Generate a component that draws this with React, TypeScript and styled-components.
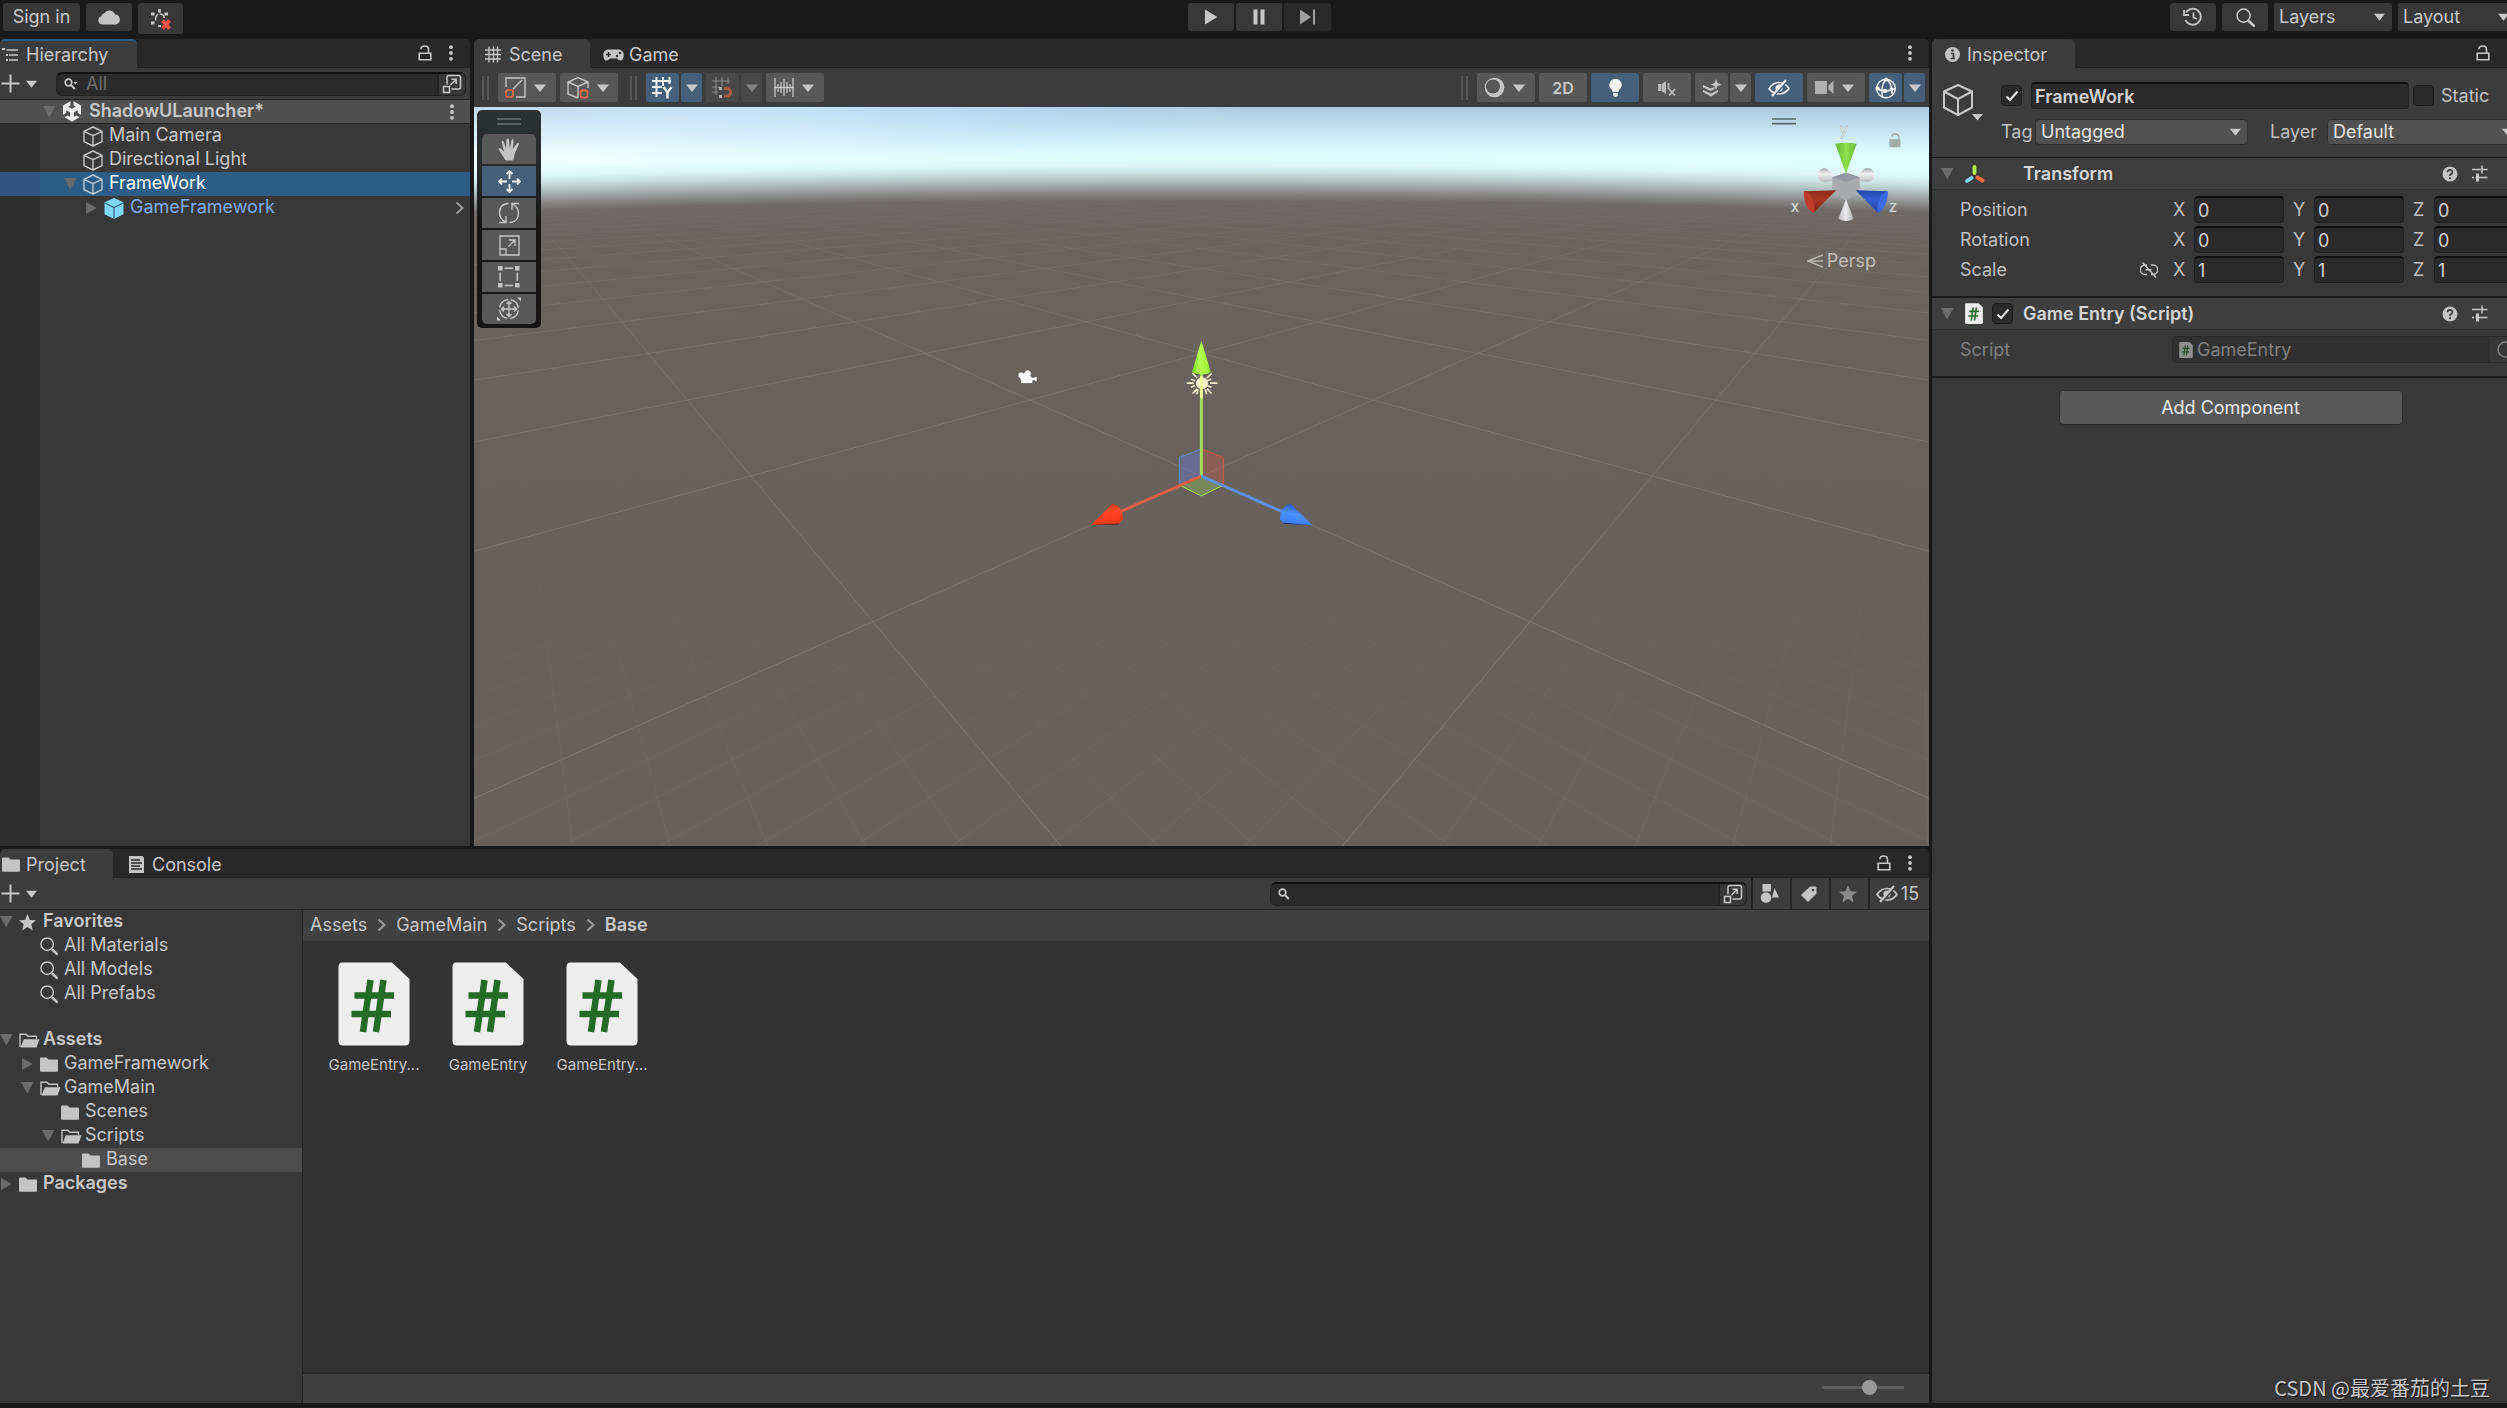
import React from 'react';
import styled, { createGlobalStyle } from 'styled-components';

const c = {
  frame: '#191919',
  tabs: '#282828',
  bar: '#3c3c3c',
  panel: '#383838',
  field: '#2a2a2a',
  line: '#232323',
  text: '#c8c8c8',
  dim: '#808080',
  button: '#585858',
  on: '#46607c',
  select: '#2c5d87',
};

const Global = createGlobalStyle`
  *, *::before, *::after { box-sizing: border-box; }
  html, body { margin: 0; background: ${c.frame}; overflow: hidden; }
  body, button, input, select {
    font-family: Inter, "Liberation Sans", "Noto Sans CJK SC", sans-serif;
    font-size: 18px;
    line-height: 24px;
    color: ${c.text};
  }
  button { margin: 0; padding: 0; border: 0; background: none; cursor: pointer; }
  svg { display: block; flex: none; }
  ul { list-style: none; margin: 0; padding: 0; }
`;

/* ---------- shell ---------- */

const Shell = styled.div`
  display: flex;
  flex-direction: column;
  width: calc(100vw + 18px);
  height: 100vh;
  padding-bottom: 5px;
  background: ${c.frame};
`;

const TopBar = styled.header`
  display: grid;
  grid-template-columns: 1fr auto 1fr;
  flex: none;
  height: 39px;
  padding: 3px 9px 0 3px;
`;

const TopGroup = styled.div<{ $gap: number; $end?: boolean }>`
  display: flex;
  align-items: flex-start;
  gap: ${p => p.$gap}px;
  justify-content: ${p => (p.$end ? 'flex-end' : 'flex-start')};
`;

const TopButton = styled.button<{ $w: number; $h?: number; $faint?: boolean }>`
  display: flex;
  align-items: center;
  justify-content: center;
  width: ${p => p.$w}px;
  height: ${p => p.$h ?? 28}px;
  border-radius: 3px;
  background: ${p => (p.$faint ? '#2a2a2a' : '#383838')};
`;

const Body = styled.div`
  display: flex;
  flex: 1;
  min-height: 0;
  gap: 3px;
`;

const Left = styled.div`
  display: flex;
  flex-direction: column;
  flex: 1;
  min-width: 0;
  gap: 3px;
`;

const Upper = styled.div`
  display: flex;
  flex: 807;
  min-height: 0;
  gap: 4px;
`;

const Panel = styled.section`
  display: flex;
  flex-direction: column;
  min-width: 0;
  min-height: 0;
  background: ${c.panel};
  border-radius: 5px 5px 0 0;
  overflow: hidden;
`;

const HierarchyPanel = styled(Panel)`
  width: 470px;
  flex: none;
`;
const ScenePanel = styled(Panel)`
  flex: 1;
`;
const ProjectPanel = styled(Panel)`
  flex: 554;
`;
const InspectorPanel = styled(Panel)`
  width: 593px;
  flex: none;
`;

const TabBar = styled.div<{ $right?: number }>`
  display: flex;
  flex: none;
  height: 29px;
  padding-right: ${p => p.$right ?? 12}px;
  background: ${c.tabs};
  border-bottom: 1px solid ${c.line};
`;

const Tab = styled.button<{ $w: number; $active?: boolean; $focus?: boolean; $gap?: number; $pad?: number }>`
  display: flex;
  align-items: center;
  gap: ${p => p.$gap ?? 8}px;
  width: ${p => p.$w}px;
  height: ${p => (p.$active ? 29 : 28)}px;
  padding: ${p => (p.$active ? 0 : 1)}px 0 0 ${p => p.$pad ?? 2}px;
  border-top: 2px solid ${p => (p.$focus ? c.select : 'transparent')};
  border-radius: ${p => (p.$focus ? 0 : 5)}px 5px 0 0;
  background: ${p => (p.$active ? c.bar : 'transparent')};
  white-space: nowrap;
`;

const Spacer = styled.div`
  flex: 1;
`;

const BareButton = styled.button<{ $w?: number; $h?: number }>`
  display: flex;
  align-items: center;
  justify-content: center;
  width: ${p => p.$w ?? 24}px;
  height: ${p => p.$h ?? 28}px;
`;

const ToolRow = styled.div`
  display: flex;
  align-items: center;
  flex: none;
  height: 32px;
  background: ${c.bar};
  border-bottom: 1px solid ${c.line};
`;

const AddButton = styled.button`
  display: flex;
  align-items: center;
  gap: 6px;
  width: 56px;
  padding-left: 1px;
`;

const SearchField = styled.div<{ $w?: number }>`
  display: flex;
  align-items: center;
  ${p => (p.$w ? `width: ${p.$w}px; flex: none;` : 'flex: 1;')}
  height: 24px;
  padding-left: 7px;
  background: ${c.field};
  border: 1px solid #212121;
  border-top: 2px solid #0e0e0e;
  border-radius: 6px;
  overflow: hidden;
`;

const SearchInput = styled.input`
  flex: 1;
  min-width: 0;
  height: 20px;
  padding: 0 8px;
  border: 0;
  outline: 0;
  background: transparent;
  &::placeholder { color: #6e6e6e; opacity: 1; }
`;

const PickerButton = styled.button`
  display: flex;
  align-items: center;
  justify-content: center;
  width: 28px;
  height: 24px;
  background: ${c.panel};
  border-left: 2px solid #212121;
`;

/* ---------- tree ---------- */

const HierarchyTree = styled.ul`
  flex: 1;
  background: linear-gradient(to right, #2d2d2d 40px, ${c.panel} 40px);
`;

const Row = styled.li<{ $level: number; $kind?: 'scene' | 'picked' | 'soft'; $base: number }>`
  display: flex;
  align-items: center;
  height: 24px;
  padding-left: ${p => p.$base + p.$level * 21}px;
  padding-right: 6px;
  background: ${p =>
    p.$kind === 'scene' ? '#505050'
    : p.$kind === 'picked' ? `linear-gradient(to right, #35547f 40px, ${c.select} 40px)`
    : p.$kind === 'soft' ? '#4d4d4d' : 'transparent'};
  ${p => (p.$kind === 'scene' ? `border-bottom: 1px solid ${c.line};` : '')}
`;

const Fold = styled.button<{ $w?: number }>`
  display: flex;
  align-items: center;
  width: ${p => p.$w ?? 20}px;
  height: 24px;
`;

const RowIcon = styled.span<{ $w?: number }>`
  display: flex;
  align-items: center;
  width: ${p => p.$w ?? 27}px;
`;

const RowText = styled.span<{ $bold?: boolean; $color?: string }>`
  flex: 1;
  font-weight: ${p => (p.$bold ? 600 : 400)};
  color: ${p => p.$color ?? c.text};
  line-height: 22px;
  padding-bottom: 2px;
  white-space: nowrap;
`;

/* ---------- scene ---------- */

const SceneTools = styled.div`
  display: flex;
  align-items: center;
  justify-content: space-between;
  flex: none;
  height: 39px;
  padding: 0 4px 0 8px;
  background: ${c.bar};
`;

const ToolSet = styled.div`
  display: flex;
  align-items: center;
  gap: 4px;
`;

const Pair = styled.div`
  display: flex;
  gap: 2px;
`;

const Grip = styled.span`
  width: 7px;
  height: 24px;
  margin-right: 5px;
  border: solid #585858;
  border-width: 0 2px;
`;

const GripGap = styled.span`
  width: 4px;
`;

const ToolButton = styled.button<{ $w: number; $on?: boolean; $off?: boolean }>`
  display: flex;
  align-items: center;
  justify-content: center;
  gap: 8px;
  width: ${p => p.$w}px;
  height: 29px;
  padding-right: ${p => (p.$w > 50 ? 3 : 0)}px;
  border-radius: 2px;
  background: ${p => (p.$on ? c.on : p.$off ? '#484848' : c.button)};
  font-size: 16px;
  font-weight: 600;
`;

/* Sky, with the haze following the wide curve where the ground fades out. */
const View = styled.div`
  position: relative;
  flex: 1;
  min-height: 0;
  overflow: hidden;
  background:
    radial-gradient(circle 22100px at 50% 22094px,
      #68615b 21700px, #6a645f 21950px, #6e6867 22000px, #878786 22008px, #a9b5b5 22018px,
      #cbe0e0 22028px, #ddf8f9 22036px, rgba(224, 255, 255, 0) 22046px),
    radial-gradient(ellipse 520px 70px at 7% 48px, rgba(255, 255, 255, 0.55), rgba(255, 255, 255, 0) 100%),
    radial-gradient(ellipse 480px 60px at 20% 0, rgba(190, 228, 255, 0.8), rgba(190, 228, 255, 0) 100%),
    linear-gradient(to bottom, #adcae2 0, #c4e2f0 22px, #dcfbff 44px, #e0ffff 55px, #e0ffff 80px);
`;

const Canvas = styled.svg`
  width: 100%;
  height: 100%;
`;

const ToolPalette = styled.div`
  position: absolute;
  left: 3px;
  top: 3px;
  display: flex;
  flex-direction: column;
  align-items: center;
  gap: 2px;
  width: 64px;
  padding: 8px 5px 4px;
  border-radius: 5px;
  background: linear-gradient(to bottom, #2a3133 0, #252b2c 60px, #151515 110px);
`;

const PaletteGrip = styled.span`
  width: 24px;
  height: 7px;
  margin-bottom: 7px;
  border: solid #5a5f60;
  border-width: 2px 0;
`;

const PaletteButton = styled.button<{ $on?: boolean; $edge?: 'top' | 'bottom' }>`
  display: flex;
  align-items: center;
  justify-content: center;
  width: 54px;
  height: 30px;
  background: ${p => (p.$on ? c.on : c.button)};
  border-radius: ${p => (p.$edge === 'top' ? '5px 5px 0 0' : p.$edge === 'bottom' ? '0 0 5px 5px' : '0')};
`;

const Orientation = styled.div`
  position: absolute;
  top: 3px;
  right: 16px;
  width: 143px;
`;

const Persp = styled.button`
  position: absolute;
  top: 142px;
  right: 53px;
  display: flex;
  align-items: center;
  gap: 4px;
  color: #c2bfbc;
`;

/* ---------- project ---------- */

const ProjectBody = styled.div`
  display: flex;
  flex: 1;
  min-height: 0;
`;

const ProjectTree = styled.div`
  flex: none;
  width: 303px;
  border-right: 1px solid ${c.line};
`;

const TreeBlock = styled.ul`
  margin-bottom: 22px;
`;

const Browser = styled.div`
  display: flex;
  flex-direction: column;
  flex: 1;
  min-width: 0;
  background: #333333;
`;

const Crumbs = styled.nav`
  display: flex;
  align-items: center;
  gap: 10px;
  height: 31px;
  padding: 0 7px 2px;
  background: #404040;
`;

const Crumb = styled.a<{ $bold?: boolean }>`
  color: ${c.text};
  text-decoration: none;
  font-weight: ${p => (p.$bold ? 600 : 400)};
`;

const Files = styled.div`
  display: flex;
  flex: 1;
  align-items: flex-start;
  padding: 21px 14px;
`;

const File = styled.figure`
  display: flex;
  flex-direction: column;
  align-items: center;
  gap: 7px;
  width: 114px;
  margin: 0;
`;

const FileName = styled.figcaption`
  font-size: 15px;
  line-height: 24px;
`;

const SizeBar = styled.div`
  display: flex;
  align-items: center;
  justify-content: flex-end;
  height: 31px;
  padding: 0 25px 3px 0;
  background: #404040;
  border-top: 2px solid #282828;
`;

const Slider = styled.input`
  appearance: none;
  width: 82px;
  height: 16px;
  margin: 0;
  background: linear-gradient(#5e5e5e, #5e5e5e) center / 100% 3px no-repeat;
  &::-webkit-slider-thumb {
    appearance: none;
    width: 15px;
    height: 15px;
    border-radius: 50%;
    background: #999999;
  }
`;

const FilterButton = styled.button<{ $w: number }>`
  display: flex;
  align-items: center;
  justify-content: center;
  gap: 3px;
  width: ${p => p.$w}px;
  height: 31px;
  padding-right: 4px;
  border-left: 2px solid ${c.line};
`;

/* ---------- inspector ---------- */

const ObjectHeader = styled.div`
  display: flex;
  gap: 18px;
  height: 90px;
  padding: 14px 0 0 11px;
  background: ${c.bar};
  border-bottom: 1px solid #1a1a1a;
`;

const ObjectIcon = styled.button`
  display: flex;
  flex-direction: column;
  align-items: flex-end;
  width: 40px;
  height: 40px;
  padding-top: 2px;
`;

const ObjectFields = styled.div`
  display: flex;
  flex-direction: column;
  flex: 1;
  gap: 9px;
`;

const FieldLine = styled.div`
  display: flex;
  align-items: center;
  height: 27px;
`;

const TextBox = styled.input<{ $w: number; $bold?: boolean }>`
  width: ${p => p.$w}px;
  height: 27px;
  padding: 0 0 0 3px;
  border: 1px solid #212121;
  border-top: 2px solid #0e0e0e;
  border-radius: 4px;
  outline: 0;
  background: ${c.field};
  color: #d2d2d2;
  font-weight: ${p => (p.$bold ? 600 : 400)};
`;

const CheckWrap = styled.span<{ $before?: number; $after?: number }>`
  display: grid;
  margin-left: ${p => p.$before ?? 0}px;
  margin-right: ${p => p.$after ?? 0}px;
  & > * { grid-area: 1 / 1; }
  & > svg { place-self: center; pointer-events: none; }
`;

const CheckInput = styled.input`
  appearance: none;
  width: 21px;
  height: 21px;
  margin: 0;
  border: 1px solid #1b1b1b;
  border-radius: 4px;
  background: ${c.field};
`;

const Drop = styled.span<{ $w: number; $after?: number }>`
  display: grid;
  width: ${p => p.$w}px;
  margin-right: ${p => p.$after ?? 0}px;
  & > * { grid-area: 1 / 1; }
  & > svg { place-self: center end; margin-right: 7px; pointer-events: none; }
`;

const DropSelect = styled.select<{ $top?: boolean }>`
  appearance: none;
  width: 100%;
  height: ${p => (p.$top ? 28 : 26)}px;
  padding: 0 24px 0 5px;
  border: ${p => (p.$top ? '0' : '1px solid #303030')};
  border-radius: ${p => (p.$top ? 2 : 4)}px;
  background: ${p => (p.$top ? '#383838' : '#515151')};
  color: ${p => (p.$top ? c.text : '#e4e4e4')};
`;

const Label = styled.label<{ $w?: number; $dim?: boolean }>`
  ${p => (p.$w ? `width: ${p.$w}px;` : '')}
  color: ${p => (p.$dim ? c.dim : '#c0c0c0')};
  white-space: nowrap;
`;

const ComponentHeader = styled.header`
  display: flex;
  align-items: center;
  height: 32px;
  padding: 0 30px 0 9px;
  background: #3e3e3e;
  border-bottom: 1px solid #303030;
`;

const HeaderIcon = styled.span<{ $w: number }>`
  display: flex;
  width: ${p => p.$w}px;
`;

const ComponentTitle = styled.h2`
  flex: 1;
  margin: 0;
  font-size: 18px;
  font-weight: 600;
  line-height: 24px;
  color: #d6d6d6;
`;

const ComponentBody = styled.div`
  display: flex;
  flex-direction: column;
  gap: 3px;
  padding: 6px 0 13px 28px;
  border-bottom: 2px solid #1a1a1a;
`;

const AxisLabel = styled.label`
  width: 21px;
  color: #c0c0c0;
`;

const Axis = styled.div`
  display: flex;
  align-items: center;
  margin-right: 9px;
`;

const LabelCell = styled.div`
  display: flex;
  align-items: center;
  justify-content: space-between;
  flex: none;
  width: 213px;
  padding-right: 15px;
  color: #c0c0c0;
`;

const ObjectField = styled.button`
  display: flex;
  align-items: center;
  gap: 4px;
  flex: 1;
  height: 27px;
  margin-right: 4px;
  padding: 0 0 0 6px;
  border: 1px solid #292929;
  border-radius: 4px;
  background: #303030;
  color: ${c.dim};
`;

const ObjectPick = styled.span`
  display: flex;
  align-items: center;
  width: 30px;
  height: 25px;
  margin-left: auto;
  padding-left: 7px;
  background: #373737;
`;

const AddComponent = styled.button`
  align-self: center;
  width: 344px;
  height: 35px;
  margin: 12px 0 0 4px;
  border: 1px solid #2c2c2c;
  border-radius: 4px;
  background: ${c.button};
  color: #e8e8e8;
`;

const Watermark = styled.footer`
  margin-top: auto;
  padding: 0 35px 2px 0;
  text-align: right;
  font-family: "Noto Sans CJK SC", sans-serif;
  font-size: 20px;
  line-height: 26px;
  color: #c9c9c9;
  text-shadow: 1px 1px 1px #111111;
`;

/* ---------- icons ---------- */

type IcoProps = { w: number; h: number; vb?: string; children: React.ReactNode };
const Ico = ({ w, h, vb, children }: IcoProps) => (
  <svg width={w} height={h} viewBox={vb ?? `0 0 ${w} ${h}`} fill="none" stroke="none" aria-hidden="true">
    {children}
  </svg>
);

const Caret = ({ color = c.text, w = 12 }: { color?: string; w?: number }) => (
  <Ico w={w} h={8} vb="0 0 12 8"><path d="M0 0.5h12L6 8z" fill={color} /></Ico>
);
const FoldDown = () => <Ico w={13} h={12}><path d="M0 0h12.5L6.2 11.5z" fill="#6b6b6b" /></Ico>;
const FoldRight = () => <Ico w={12} h={14}><path d="M1 1l11 6-11 6z" fill="#6b6b6b" /></Ico>;
const Plus = () => <Ico w={19} h={19}><path d="M9.5 0.5v18M0.5 9.5h18" stroke={c.text} strokeWidth="2" /></Ico>;
const Dots = () => (
  <Ico w={6} h={16}><g fill={c.text}><circle cx="3" cy="2.2" r="1.9" /><circle cx="3" cy="8" r="1.9" /><circle cx="3" cy="13.8" r="1.9" /></g></Ico>
);
const Lock = () => (
  <Ico w={14} h={16}><path d="M1.2 8.2h11.6v6.5H1.2zM2.8 4.2C3 1.9 5 1 6.7 1c2.4 0 3.8 1.5 3.8 3.6v3.6" stroke={c.text} strokeWidth="1.6" /></Ico>
);
const Picker = () => (
  <Ico w={20} h={20}>
    <path d="M5 10.5V3.5Q5 1.5 7 1.5h9.500Q18.500 1.500 18.500 3.500v9.500Q18.500 15 16.500 15H9.500" stroke={c.text} strokeWidth="1.5" />
    <path d="M1.500 12.500h6v6h-6zM8.500 11l5.500-5.500M9.500 5.300h4.700v4.700" stroke={c.text} strokeWidth="1.500" />
  </Ico>
);
const SmallLens = ({ menu }: { menu?: boolean }) => (
  <Ico w={14} h={12}>
    <circle cx="4.500" cy="4.500" r="3.300" stroke={c.text} strokeWidth="1.700" />
    <path d="M7 7l3.800 4" stroke={c.text} strokeWidth="1.900" />
    {menu && <path d="M9.500 4h4l-2 2.500z" fill={c.text} />}
  </Ico>
);
const Lens = ({ s = 18 }: { s?: number }) => (
  <Ico w={s} h={s} vb="0 0 18 18">
    <circle cx="7.200" cy="7.200" r="6.200" stroke={c.text} strokeWidth="1.500" />
    <path d="M12.600 12.800l4.200 4" stroke={c.text} strokeWidth="2.500" strokeLinecap="round" />
  </Ico>
);
const Cube = ({ w = 20, h = 21, color = c.text }: { w?: number; h?: number; color?: string }) => (
  <Ico w={w} h={h} vb="0 0 20 21"><path d="M10 1l9 4.300v10.400l-9 4.300-9-4.300V5.300zM1 5.300l9 4.400 9-4.400M10 9.700V20" stroke={color} strokeWidth="1.400" strokeLinejoin="round" /></Ico>
);
const PrefabCube = () => (
  <Ico w={20} h={21}>
    <path d="M10 0l9.500 4.300v11.900L10 21 .5 16.200V4.300z" fill="#7fd6fd" />
    <path d="M1 5l9 4.500L19 5M10 9.500V20.500" stroke="#3d6478" strokeWidth="1.300" />
  </Ico>
);
const UnityMark = () => (
  <Ico w={18} h={21}>
    <path d="M7.500.3v4L5.200 5.600 9 7.700l3.800-2.100-2.300-1.300v-4L18 4.600v9.200l-3.200-1.900V9.200L11 11.300v4.500l2.400-1.400 3 1.800L9 20.700l-7.400-4.500 3-1.800L7 15.800v-4.500L3.200 9.200v2.700L0 13.800V4.600z" fill="#ececec" />
  </Ico>
);
const ListMark = () => (
  <Ico w={16} h={14}><path d="M4.500 2h11.500M7 7h9M7 12h9" stroke={c.text} strokeWidth="1.600" /><path d="M0 1h3M4 7h2M4 12h2" stroke={c.text} strokeWidth="2" /></Ico>
);
const Folder = () => (
  <Ico w={18} h={15}><path d="M0 1.500Q0 .5 1 .5h5.500l2 2H17q1 0 1 1V14q0 .8-1 .8H1Q0 14.800 0 14z" fill="#c4c4c4" /></Ico>
);
const OpenFolder = () => (
  <Ico w={21} h={15}>
    <path d="M1 14V1.200h5.800l2 2h8.700V6" stroke="#c4c4c4" strokeWidth="1.400" />
    <path d="M4.800 6.200H20.500L17.500 14.500H1.500z" fill="#c4c4c4" />
  </Ico>
);
const Star = ({ s = 17, color = '#c4c4c4' }: { s?: number; color?: string }) => (
  <Ico w={s} h={s} vb="0 0 17 17"><path d="M8.500 0l2.400 5.900 6.100.4-4.700 4 1.500 6.200-5.300-3.400-5.300 3.400 1.500-6.200L0 6.300l6.100-.4z" fill={color} /></Ico>
);
const Chevron = () => (
  <Ico w={9} h={14}><path d="M1.500 1.500L7.500 7l-6 5.500" stroke="#9a9a9a" strokeWidth="2.200" /></Ico>
);
const Cloud = () => (
  <Ico w={22} h={16}><path d="M4.500 15.500A4.200 4.200 0 0 1 3.300 7.300 4 4 0 0 1 6.300 4.200 6 6 0 0 1 17 5.600a5 5 0 0 1 .8 9.900z" fill="#c4c4c4" /></Ico>
);
const Debug = () => (
  <Ico w={22} h={22}>
    <path d="M9.500 1v3.500M1 6h3.500M1 15h3.500M14.500 6H18M9.500 19v-2" stroke={c.text} strokeWidth="2.800" />
    <path d="M5.800 12.500C5 8 7.500 6 10 6s4 1.500 4.300 4" stroke={c.text} strokeWidth="1.500" strokeDasharray="7 1.500" />
    <path d="M12.500 12.500l7 8M19.500 12.500l-7 8" stroke="#ff5347" strokeWidth="3.600" />
  </Ico>
);
const Play = () => <Ico w={14} h={16}><path d="M1 .5l12.500 7.500L1 15.500z" fill={c.text} /></Ico>;
const Pause = () => <Ico w={12} h={16}><path d="M2.500.5v15M9.500.5v15" stroke={c.text} strokeWidth="4" /></Ico>;
const Step = () => <Ico w={17} h={16}><path d="M1 .5l11 7.500-11 7.500z" fill="#a0a0a0" /><path d="M15 .5v15" stroke="#a0a0a0" strokeWidth="2" /></Ico>;
const History = () => (
  <Ico w={20} h={20}>
    <path d="M3 5.500A8 8 0 1 1 2.500 13M1 3v5h5" stroke={c.text} strokeWidth="1.800" />
    <path d="M10.500 5.500v5l3.500 1.500" stroke={c.text} strokeWidth="1.800" />
  </Ico>
);
const GridMark = () => (
  <Ico w={16} h={17}><path d="M4 .5v16M8.500 .5v16M12.500.5v16M0 4h16M0 8.500h16M0 13h16" stroke={c.text} strokeWidth="1.300" /></Ico>
);
const Pad = () => (
  <Ico w={21} h={12}>
    <path d="M5 .5h11a5 5 0 0 1 4.700 5.500c0 3.500-1.200 5.500-3.200 5.500-1.500 0-2.300-1-3.500-2H7c-1.200 1-2 2-3.500 2-2 0-3.200-2-3.200-5.500A5 5 0 0 1 5 .5z" fill="#c4c4c4" />
    <path d="M3 5.500h5M5.500 3v5" stroke="#282828" strokeWidth="1.600" /><circle cx="17" cy="4" r="1.200" fill="#282828" /><circle cx="14" cy="7" r="1.200" fill="#282828" />
  </Ico>
);
const Pivot = () => (
  <Ico w={21} h={21}>
    <path d="M1 10V1h19v19h-9M8 12l9-9" stroke={c.text} strokeWidth="1.400" />
    <rect x="1" y="13" width="7" height="7" rx="1.500" stroke="#f4693e" strokeWidth="1.700" />
  </Ico>
);
const Handle = () => (
  <Ico w={22} h={22}>
    <path d="M11 21L1 17V5l10-4.300L21 5v6M1 5l10 4.500L21 5M11 9.500V21" stroke={c.text} strokeWidth="1.400" />
    <rect x="13.500" y="13.500" width="7" height="7" rx="1.500" stroke="#f4693e" strokeWidth="1.800" />
  </Ico>
);
const GridY = () => (
  <Ico w={21} h={22}>
    <path d="M4.500 0v20M11 0v9M17.500 0v7M0 4h19M0 10h10M0 16h10" stroke="#f0f0f0" strokeWidth="2" />
    <path d="M11.500 10l4 5.500 4-5.500M15.500 15v6.500" stroke="#f0f0f0" strokeWidth="2.400" />
  </Ico>
);
const GridSnap = () => (
  <Ico w={21} h={22}>
    <path d="M4 0v18M10 0v9M16 0v7M0 4h18M0 10h8M0 15h6" stroke="#8a8a8a" strokeWidth="1.200" />
    <path d="M12 11.500h3a3.700 3.700 0 0 1 0 7.500h-3" stroke="#a9593f" strokeWidth="3" />
    <path d="M7 11.500h3M7 19.500h3" stroke="#b0b0b0" strokeWidth="3" />
  </Ico>
);
const Ruler = () => (
  <Ico w={20} h={19}><path d="M1 0v19M19 0v19M10 1v17M4 6v8M7 4v11M13 4v11M16 6v8M0 9.500h20" stroke={c.text} strokeWidth="1.300" /></Ico>
);
const Shade = () => (
  <Ico w={21} h={21}>
    <circle cx="10.500" cy="10.500" r="9.800" fill="#c4c4c4" /><circle cx="9" cy="9.500" r="7" fill="#585858" />
  </Ico>
);
const Bulb = () => (
  <Ico w={13} h={18}><path d="M6.500 0a6 6 0 0 1 3.500 11l-.5 2h-6L3 11A6 6 0 0 1 6.500 0zM4 14h5v2q-1 2-2.500 2T4 16z" fill="#f2f2f2" /></Ico>
);
const Mute = () => (
  <Ico w={18} h={16}>
    <path d="M0 4h3v7H0zM3.500 4L8 1v13l-4.500-3z" fill="#b8b8b8" /><path d="M10.500 3v6" stroke="#b8b8b8" strokeWidth="1.800" />
    <path d="M11 9l6 6.500M17 9l-6 6.500" stroke="#b8b8b8" strokeWidth="1.800" />
  </Ico>
);
const Effects = () => (
  <Ico w={20} h={18}>
    <path d="M1 6l8 3.500 3-1.500 1 1.500-4 2.500L1 8.500zM1 11l8 3.500 7-3.500v2L9 17.500 1 13z" fill="#c4c4c4" />
    <path d="M14 0l1.600 3.900L19.500 5.500l-3.900 1.600L14 11l-1.600-3.900L8.500 5.500l3.900-1.600z" fill="#c4c4c4" />
  </Ico>
);
const EyeOff = ({ color = c.text, back = c.bar }: { color?: string; back?: string }) => (
  <Ico w={22} h={18}>
    <path d="M1 9.500Q5 3.500 11 3.500t10 6Q17 15 11 15T1 9.500z" stroke={color} strokeWidth="1.700" />
    <circle cx="11" cy="9" r="3.600" fill={color} />
    <path d="M5.500 17.500L19.500 1.500" stroke={back} strokeWidth="2" />
    <path d="M4 17L18 1" stroke={color} strokeWidth="2" />
  </Ico>
);
const Camera = () => (
  <Ico w={19} h={13}><path d="M0 0h12v13H0zM13.500 4.500L18.500 0v13l-5-4.500z" fill="#b0b0b0" /></Ico>
);
const Gizmos = () => (
  <Ico w={22} h={22}>
    <circle cx="11" cy="11.500" r="9.300" stroke="#f0f0f0" strokeWidth="1.500" />
    <path d="M11 2Q5 10 7.500 20.500M11 2q6.500 4 6 15M2 11.500q8 5 18 0" stroke="#f0f0f0" strokeWidth="1.500" />
    <circle cx="11" cy="2.500" r="2" fill="#f0f0f0" /><circle cx="2.500" cy="11.500" r="2.200" fill="#f0f0f0" /><circle cx="10" cy="14" r="2.200" fill="#f0f0f0" /><circle cx="16.500" cy="12.500" r="2" fill="#f0f0f0" />
  </Ico>
);
const Hand = () => (
  <Ico w={22} h={23}>
    <path d="M7 21.500L2 13.500Q.3 11 .8 10.300q1-.8 2.500.7L6 13.500 3.800 4.500q-.2-1.700.8-1.800.9-.1 1.400 1.500L8 10.500 8.500 2Q8.700.5 9.800.5T11 2l.7 8.300L13.500 2.500q.4-1.400 1.400-1.200.9.300.7 1.700L14.800 11l4-5.500q.9-1.200 1.700-.6.800.6.1 2L17 15l-1.500 6.500q-.5 1-1.500 1H8.500q-1 0-1.500-1z" fill="#c4c4c4" />
  </Ico>
);
const Move = () => (
  <Ico w={23} h={23}>
    <path d="M11.500 1v8M11.500 14v8M1 11.500h8M14 11.500h8M8.500 4l3-3 3 3M8.500 19l3 3 3-3M4 8.500l-3 3 3 3M19 8.500l3 3-3 3" stroke="#f0f0f0" strokeWidth="1.900" />
  </Ico>
);
const Rotate = () => (
  <Ico w={22} h={22}>
    <path d="M10.500 1.500C4 1.500 1.500 6 1.500 10.500c0 4 2 7.500 6 9.500M1 20.500h7V14M11.500 20.500c6.500 0 9-4.500 9-9.500 0-4-2.500-7-6-9M21 1.500h-7V8" stroke={c.text} strokeWidth="1.400" />
  </Ico>
);
const Scale = () => (
  <Ico w={21} h={21}><path d="M1 1h19v19H1zM1 14h6v6M9.500 11.500l6.500-6.500M10 5h6v6" stroke={c.text} strokeWidth="1.300" /></Ico>
);
const Rect = () => (
  <Ico w={22} h={22}>
    <path d="M0 0h4.500v4.500H0zM17 0h4.500v4.500H17zM0 17h4.500v4.500H0zM17 17h4.500v4.500H17z" fill="#c4c4c4" />
    <path d="M6.500 2.200h8.500M6.500 19.500h8.500M2.200 6.500V15M19.300 6.500V15" stroke={c.text} strokeWidth="1.500" />
  </Ico>
);
const Transform = () => (
  <Ico w={24} h={24}>
    <circle cx="12" cy="12" r="9.500" stroke={c.text} strokeWidth="1.500" strokeDasharray="12 2.900" strokeDashoffset="-1.500" />
    <path d="M12 4.500v15M4.500 12h15M9.500 7L12 4.500 14.500 7M9.500 17l2.500 2.500 2.500-2.500M7 9.500L4.500 12 7 14.500M17 9.500l2.500 2.500-2.500 2.500" stroke={c.text} strokeWidth="1.400" />
    <path d="M20 .5h4V4.500zM0 19.500v4h4z" fill={c.text} />
  </Ico>
);
const ConsoleMark = () => (
  <Ico w={15} h={17}><path d="M0 0h13.500L15 1.500V17H0z" fill="#c4c4c4" /><path d="M2 4h9M2 7h11M2 10h9M2 13h11" stroke="#282828" strokeWidth="1.300" /></Ico>
);
const Info = () => (
  <Ico w={15} h={15}><circle cx="7.500" cy="7.500" r="7.500" fill="#c4c4c4" /><path d="M6 6.500h2.500v5M5.500 11.500h4.500" stroke="#3c3c3c" strokeWidth="1.600" /><circle cx="7.500" cy="3.500" r="1.300" fill="#3c3c3c" /></Ico>
);
const Help = () => (
  <Ico w={16} h={16}>
    <circle cx="8" cy="8" r="7.500" fill="#c4c4c4" />
    <path d="M5.500 6.200Q5.700 3.800 8 3.800t2.500 2.200Q10.500 7.500 8 9v1" stroke="#3c3c3c" strokeWidth="1.700" /><circle cx="8" cy="12.200" r="1.100" fill="#3c3c3c" />
  </Ico>
);
const Preset = () => (
  <Ico w={16} h={17}><path d="M0 4.500h9M10 .5v8M10 4.500h5.500M0 12.500h2M3.500 12.500h12" stroke={c.text} strokeWidth="1.500" /><path d="M5.500 8.500v8" stroke={c.text} strokeWidth="3" /></Ico>
);
const Axes = () => (
  <Ico w={20} h={18}>
    <path d="M9.500 2v6" stroke="#b2ef4c" strokeWidth="3.800" strokeLinecap="round" />
    <path d="M6.500 13l-4.500 3" stroke="#7fd6fd" strokeWidth="3.800" strokeLinecap="round" />
    <path d="M12.500 12.500l5 3" stroke="#ff6b40" strokeWidth="3.800" strokeLinecap="round" />
  </Ico>
);
const Unlink = () => (
  <Ico w={18} h={16}><path d="M7 3H5a4.500 4.500 0 0 0 0 9.500h2M11 3h2a4.500 4.500 0 0 1 0 9.500h-2M5.500 7.700h6M2.500.5l13.500 15" stroke={c.text} strokeWidth="1.400" /></Ico>
);
const Tick = () => <Ico w={14} h={12}><path d="M1.500 6.500L5 10 12.500 1.500" stroke="#e6e6e6" strokeWidth="2.200" /></Ico>;
const ScriptMark = ({ w, h, faded }: { w: number; h: number; faded?: boolean }) => (
  <svg width={w} height={h} viewBox="0 0 72 84" opacity={faded ? 0.5 : 1} aria-hidden="true">
    <path d="M4 .5h50L71.500 17v62q0 4.500-4.500 4.500H5Q.5 83.500.5 79V5Q.5.500 4 .5z" fill="#eeeeee" />
    <g stroke="#256b28" strokeWidth="6.500" fill="none">
      <path d="M32.500 18l-7.500 52M45.500 18L38 70M16.500 33.500H56M13.500 52H53" />
    </g>
  </svg>
);
const Shapes = () => (
  <Ico w={19} h={19}><path d="M2.500 0h8.500v7.500H2.500zM14.500 4l4.500 9.500h-7z" fill="#c4c4c4" /><circle cx="6" cy="13.500" r="5.300" fill="#c4c4c4" /></Ico>
);
const TagMark = () => (
  <Ico w={16} h={16}><path d="M9 1h6v6.500L7 15.500 .5 9z" fill="#c4c4c4" stroke="#c4c4c4" strokeLinejoin="round" /><circle cx="12" cy="4" r="1.300" fill={c.bar} /></Ico>
);

/* ---------- scene drawing ---------- */

/* Ground-plane projection: the camera looks at the origin along the grid diagonal. */
const HORIZON = 317.5;
const SPREAD = 716.5;
const DEPTH = 1.59;
const NEAR = 0.15;

type Pt = [number, number];

function project(gx: number, gz: number): Pt {
  const n = (gx + gz) / 20;
  const d = n + DEPTH;
  return [(SPREAD * (gx - gz)) / 20 / d, (-HORIZON * n) / d];
}

function groundLine(k: number, far: number): [Pt, Pt][] {
  const nearZ = (NEAR - DEPTH) * 20 - k;
  const a = project(k, nearZ);
  const b = project(k, far);
  return [
    [a, b],
    [[-a[0], a[1]], [-b[0], b[1]]],
  ];
}

function gridPath(step: number, from: number, to: number, far: number, skip?: number) {
  const out: string[] = [];
  for (let k = from; k <= to; k += step) {
    if (skip && k % skip === 0) continue;
    groundLine(k, far).forEach(([p, q]) =>
      out.push(`M${p[0].toFixed(1)} ${p[1].toFixed(1)}L${q[0].toFixed(1)} ${q[1].toFixed(1)}`),
    );
  }
  return out.join('');
}

const majorGrid = gridPath(10, -160, 400, 600);
const minorGrid = gridPath(1, -40, 30, 60, 10);

const SceneDrawing = () => (
  <Canvas viewBox="-728 -369 1456 739" preserveAspectRatio="xMidYMid slice" role="img" aria-label="Scene view">
    <defs>
      <linearGradient id="majorFade" gradientUnits="userSpaceOnUse" x1="0" y1="-285" x2="0" y2="370">
        <stop offset="0" stopColor="#8a8a88" stopOpacity="0" />
        <stop offset="0.1" stopColor="#8a8a88" stopOpacity="0.200" />
        <stop offset="0.25" stopColor="#8a8c8a" stopOpacity="0.400" />
        <stop offset="1" stopColor="#8a908e" stopOpacity="0.550" />
      </linearGradient>
      <linearGradient id="minorFade" gradientUnits="userSpaceOnUse" x1="0" y1="-60" x2="0" y2="370">
        <stop offset="0" stopColor="#7d7f7b" stopOpacity="0" />
        <stop offset="0.5" stopColor="#7d7f7b" stopOpacity="0.070" />
        <stop offset="1" stopColor="#7d7f7b" stopOpacity="0.240" />
      </linearGradient>
      <linearGradient id="coneUp" x1="0" x2="1"><stop offset="0" stopColor="#6fe01d" /><stop offset="0.4" stopColor="#b4ff50" /><stop offset="0.8" stopColor="#a2f53c" /><stop offset="1" stopColor="#6fd71f" /></linearGradient>
      <linearGradient id="coneRed" x1="0" y1="0" x2="0.300" y2="1"><stop offset="0" stopColor="#b42a12" /><stop offset="0.4" stopColor="#ff4a26" /><stop offset="1" stopColor="#f23a18" /></linearGradient>
      <linearGradient id="coneBlue" x1="0.300" y1="0" x2="0" y2="1"><stop offset="0" stopColor="#2a55c0" /><stop offset="0.4" stopColor="#4a92ff" /><stop offset="1" stopColor="#3878f0" /></linearGradient>
    </defs>
    <path d={minorGrid} stroke="url(#minorFade)" strokeWidth="1" fill="none" />
    <path d={majorGrid} stroke="url(#majorFade)" strokeWidth="1" fill="none" />
    <g transform="scale(0.33333) translate(-604.500 -439.500)">
      <g fill="#ffffff" stroke="#57524d" strokeWidth="2">
        <path d="M62 150v10q0 2 3 2h33v-8l5-1 8 5v-18l-8 3-6 1q-3-2-5-5a11 11 0 1 0-20-7 10 10 0 1 0-12 15z" />
      </g>
      <path d="M604 440V358l66 26v82z" fill="#c85a46" fillOpacity="0.350" />
      <path d="M604 358l66 26v82" stroke="#d8563c" strokeWidth="3" fill="none" />
      <path d="M604 440V358l-66 26v82z" fill="#6a78c8" fillOpacity="0.500" />
      <path d="M604 358l-66 26v82" stroke="#5c8ae0" strokeWidth="3" fill="none" />
      <path d="M604 440l66 27-66 32-66-32z" fill="#86b060" fillOpacity="0.500" />
      <path d="M538 467l66 32 66-32" stroke="#a4ee50" strokeWidth="3" fill="none" />
      <path d="M604 440V130" stroke="#a4dc5c" strokeWidth="9" />
      <path d="M604 440L360 547" stroke="#de5f44" strokeWidth="9" />
      <path d="M604 440L848 547" stroke="#5f90ee" strokeWidth="9" />
      <path d="M272 587L337 523Q354 525 363 542Q371 558 368 570L357 583z" fill="url(#coneRed)" />
      <path d="M272 587l84-5 2 2z" fill="#4a120a" />
      <path d="M938 587L872 523Q856 525 846 542Q839 556 841 570L852 583z" fill="url(#coneBlue)" />
      <path d="M938 587l-88-7v3z" fill="#14225c" />
      <g stroke="#fff1cf" strokeWidth="5">
        <path d="M560 161h22M630 161h22M573 149l13 5M573 173l12-5M577 131l15 14M578 192l13-14M634 149l-13 5M634 173l-12-5M635 132l-15 14M635 192l-14-14M594 180l-4 14M616 180l4 14M606 184v22" />
      </g>
      <circle cx="606" cy="161" r="18" fill="#fff1cf" />
      <path d="M604 206V140" stroke="#f0ff90" strokeWidth="8" />
      <path d="M604 33l29 95q-28 14-57 0z" fill="url(#coneUp)" />
    </g>
  </Canvas>
);

const AxisGizmo = () => (
  <svg width="143" height="123" viewBox="90 90 429 369" fontFamily="Inter, sans-serif" aria-hidden="true">
    <defs>
      <linearGradient id="g1" x1="0" x2="1"><stop offset="0" stopColor="#63b532" /><stop offset="0.5" stopColor="#8fe04c" /><stop offset="1" stopColor="#6cba38" /></linearGradient>
      <linearGradient id="g2" x1="0" x2="1"><stop offset="0" stopColor="#b8b8ba" /><stop offset="0.5" stopColor="#ececee" /><stop offset="1" stopColor="#a8a8aa" /></linearGradient>
      <linearGradient id="g3" x1="0" y1="0" x2="0" y2="1"><stop offset="0" stopColor="#8e2b1c" /><stop offset="0.4" stopColor="#a93826" /><stop offset="1" stopColor="#7c2417" /></linearGradient>
      <linearGradient id="g4" x1="0" y1="0" x2="0" y2="1"><stop offset="0" stopColor="#2546a8" /><stop offset="0.4" stopColor="#345fd2" /><stop offset="1" stopColor="#2242a0" /></linearGradient>
      <linearGradient id="g5" x1="0" y1="0" x2="0" y2="1"><stop offset="0" stopColor="#a2a2a4" /><stop offset="0.4" stopColor="#f2f2f4" /><stop offset="1" stopColor="#b8b8ba" /></linearGradient>
    </defs>
    <path d="M96 117h72M96 131h72" stroke="#56696d" strokeWidth="5" />
    <path d="M278 303l-24 4a21 21 0 1 1 6-41l20 16zM358 303l24 3a21 21 0 1 0-8-40l-20 18z" fill="url(#g5)" />
    <path d="M318 278l41 14v42l-41 28-41-28v-42z" fill="#a9aaae" />
    <path d="M318 278l41 14-41 14-41-14z" fill="#94979f" />
    <path d="M286 191q32-6 64 0l-32 90z" fill="url(#g1)" />
    <path d="M318 358l23 58q-22 14-46 0z" fill="url(#g2)" />
    <path d="M289 331l-68 67-29-64z" fill="url(#g3)" />
    <path d="M192 334q12-2 22 18 14 26 8 46-14-2-23-22-10-26-7-42z" fill="#c23a2b" />
    <path d="M347 331l66 67 30-64z" fill="url(#g4)" />
    <path d="M443 334q3 16-7 40-10 22-22 24-6-18 5-42 10-20 24-22z" fill="#3b6be4" />
    <g fill="#f2f2f2" fontSize="46" textAnchor="middle" stroke="#8a9494" strokeWidth="1"><text x="312" y="164">y</text><text x="165" y="396">x</text><text x="459" y="396">z</text></g>
    <path d="M448 178h33v24h-33z" fill="#a2aaaa" />
    <path d="M455 170q2-8 10-8 12 0 12 12v6" stroke="#a2aaaa" strokeWidth="4" fill="none" />
  </svg>
);

/* ---------- parts ---------- */

const Check = ({ id, label, on, before, after }: { id: string; label?: string; on?: boolean; before?: number; after?: number }) => (
  <CheckWrap $before={before} $after={after}>
    <CheckInput id={id} type="checkbox" defaultChecked={on} aria-label={label} />
    {on && <Tick />}
  </CheckWrap>
);

const Vector = ({ name, value, linked }: { name: string; value: string; linked?: boolean }) => (
  <FieldLine>
    <LabelCell>
      <span>{name}</span>
      {linked && <Unlink />}
    </LabelCell>
    {['X', 'Y', 'Z'].map(a => (
      <Axis key={a}>
        <AxisLabel htmlFor={`${name}-${a}`}>{a}</AxisLabel>
        <TextBox id={`${name}-${a}`} $w={90} defaultValue={value} />
      </Axis>
    ))}
  </FieldLine>
);

type Node = { text: string; level: number; icon: React.ReactNode; fold?: 'open' | 'shut'; bold?: boolean; soft?: boolean };

const favorites: Node[] = [
  { text: 'Favorites', level: 0, icon: <Star />, fold: 'open', bold: true },
  { text: 'All Materials', level: 1, icon: <Lens /> },
  { text: 'All Models', level: 1, icon: <Lens /> },
  { text: 'All Prefabs', level: 1, icon: <Lens /> },
];

const assets: Node[] = [
  { text: 'Assets', level: 0, icon: <OpenFolder />, fold: 'open', bold: true },
  { text: 'GameFramework', level: 1, icon: <Folder />, fold: 'shut' },
  { text: 'GameMain', level: 1, icon: <OpenFolder />, fold: 'open' },
  { text: 'Scenes', level: 2, icon: <Folder /> },
  { text: 'Scripts', level: 2, icon: <OpenFolder />, fold: 'open' },
  { text: 'Base', level: 3, icon: <Folder />, soft: true },
  { text: 'Packages', level: 0, icon: <Folder />, fold: 'shut', bold: true },
];

const Branch = ({ nodes }: { nodes: Node[] }) => (
  <TreeBlock>
    {nodes.map(n => (
      <Row key={n.text} $level={n.level} $base={0} $kind={n.soft ? 'soft' : undefined}>
        <Fold $w={19} aria-label={`Toggle ${n.text}`}>{n.fold === 'open' ? <FoldDown /> : n.fold ? <FoldRight /> : null}</Fold>
        <RowIcon $w={24}>{n.icon}</RowIcon>
        <RowText $bold={n.bold}>{n.text}</RowText>
      </Row>
    ))}
  </TreeBlock>
);

const Hierarchy = () => (
  <HierarchyPanel>
    <TabBar $right={7}>
      <Tab $w={137} $active $focus><ListMark />Hierarchy</Tab>
      <Spacer />
      <BareButton $w={28} aria-label="Lock"><Lock /></BareButton>
      <BareButton aria-label="Menu"><Dots /></BareButton>
    </TabBar>
    <ToolRow>
      <AddButton aria-label="Create"><Plus /><Caret w={11} /></AddButton>
      <SearchField $w={410}>
        <SmallLens menu />
        <SearchInput placeholder="All" aria-label="Search hierarchy" />
        <PickerButton aria-label="Pick"><Picker /></PickerButton>
      </SearchField>
    </ToolRow>
    <HierarchyTree>
      <Row $level={0} $base={43} $kind="scene">
        <Fold aria-label="Toggle scene"><FoldDown /></Fold>
        <RowIcon $w={26}><UnityMark /></RowIcon>
        <RowText $bold>ShadowULauncher*</RowText>
        <BareButton $w={24} $h={22} aria-label="Scene menu"><Dots /></BareButton>
      </Row>
      <Row $level={1} $base={62}><RowIcon $w={26}><Cube /></RowIcon><RowText>Main Camera</RowText></Row>
      <Row $level={1} $base={62}><RowIcon $w={26}><Cube /></RowIcon><RowText>Directional Light</RowText></Row>
      <Row $level={1} $base={43} $kind="picked">
        <Fold $w={19} aria-label="Toggle FrameWork"><FoldDown /></Fold>
        <RowIcon $w={26}><Cube color="#b9cbd9" /></RowIcon>
        <RowText $color="#ffffff">FrameWork</RowText>
      </Row>
      <Row $level={2} $base={43}>
        <Fold $w={19} aria-label="Toggle GameFramework"><FoldRight /></Fold>
        <RowIcon $w={26}><PrefabCube /></RowIcon>
        <RowText $color="#7fadf1">GameFramework</RowText>
        <Chevron />
      </Row>
    </HierarchyTree>
  </HierarchyPanel>
);

const Scene = () => (
  <ScenePanel>
    <TabBar $right={7}>
      <Tab $w={116} $active $pad={11}><GridMark />Scene</Tab>
      <Tab $w={110} $pad={13} $gap={5}><Pad />Game</Tab>
      <Spacer />
      <BareButton aria-label="Menu"><Dots /></BareButton>
    </TabBar>
    <SceneTools>
      <ToolSet>
        <Grip />
        <ToolButton $w={58} aria-label="Pivot"><Pivot /><Caret /></ToolButton>
        <ToolButton $w={58} aria-label="Handle"><Handle /><Caret /></ToolButton>
        <GripGap /><Grip />
        <Pair>
          <ToolButton $w={33} $on aria-label="Grid"><GridY /></ToolButton>
          <ToolButton $w={21} $on aria-label="Grid options"><Caret /></ToolButton>
        </Pair>
        <Pair>
          <ToolButton $w={33} $off aria-label="Snap"><GridSnap /></ToolButton>
          <ToolButton $w={21} $off aria-label="Snap options"><Caret color="#858585" /></ToolButton>
        </Pair>
        <ToolButton $w={58} aria-label="Increment"><Ruler /><Caret /></ToolButton>
      </ToolSet>
      <ToolSet>
        <Grip />
        <ToolButton $w={58} aria-label="Shading"><Shade /><Caret /></ToolButton>
        <ToolButton $w={48}>2D</ToolButton>
        <ToolButton $w={48} $on aria-label="Lighting"><Bulb /></ToolButton>
        <ToolButton $w={48} aria-label="Audio"><Mute /></ToolButton>
        <Pair>
          <ToolButton $w={33} aria-label="Effects"><Effects /></ToolButton>
          <ToolButton $w={21} aria-label="Effects options"><Caret /></ToolButton>
        </Pair>
        <ToolButton $w={48} $on aria-label="Hidden objects"><EyeOff color="#f0f0f0" back={c.on} /></ToolButton>
        <ToolButton $w={58} aria-label="Camera"><Camera /><Caret /></ToolButton>
        <Pair>
          <ToolButton $w={33} $on aria-label="Gizmos"><Gizmos /></ToolButton>
          <ToolButton $w={21} $on aria-label="Gizmo options"><Caret /></ToolButton>
        </Pair>
      </ToolSet>
    </SceneTools>
    <View>
      <SceneDrawing />
      <ToolPalette>
        <PaletteGrip />
        <PaletteButton $edge="top" aria-label="Hand"><Hand /></PaletteButton>
        <PaletteButton $on aria-label="Move"><Move /></PaletteButton>
        <PaletteButton aria-label="Rotate"><Rotate /></PaletteButton>
        <PaletteButton aria-label="Scale"><Scale /></PaletteButton>
        <PaletteButton aria-label="Rect"><Rect /></PaletteButton>
        <PaletteButton $edge="bottom" aria-label="Transform"><Transform /></PaletteButton>
      </ToolPalette>
      <Orientation><AxisGizmo /></Orientation>
      <Persp>
        <Ico w={16} h={14}><path d="M16 1L1 7l15 6M1 7h15" stroke="#b5b2ae" strokeWidth="1.500" /></Ico>
        Persp
      </Persp>
    </View>
  </ScenePanel>
);

const Project = () => (
  <ProjectPanel>
    <TabBar $right={7}>
      <Tab $w={113} $active $gap={6}><Folder />Project</Tab>
      <Tab $w={120} $pad={16}><ConsoleMark />Console</Tab>
      <Spacer />
      <BareButton $w={28} aria-label="Lock"><Lock /></BareButton>
      <BareButton aria-label="Menu"><Dots /></BareButton>
    </TabBar>
    <ToolRow>
      <AddButton aria-label="Create"><Plus /><Caret w={11} /></AddButton>
      <Spacer />
      <SearchField $w={477}>
        <SmallLens />
        <SearchInput aria-label="Search project" />
        <PickerButton aria-label="Pick"><Picker /></PickerButton>
      </SearchField>
      <GripGap />
      <FilterButton $w={39} aria-label="Filter by type"><Shapes /></FilterButton>
      <FilterButton $w={39} aria-label="Filter by label"><TagMark /></FilterButton>
      <FilterButton $w={39} aria-label="Favorite"><Star s={18} color="#8a8a8a" /></FilterButton>
      <FilterButton $w={61}><EyeOff />15</FilterButton>
    </ToolRow>
    <ProjectBody>
      <ProjectTree>
        <Branch nodes={favorites} />
        <Branch nodes={assets} />
      </ProjectTree>
      <Browser>
        <Crumbs>
          <Crumb href="#assets">Assets</Crumb><Chevron />
          <Crumb href="#gamemain">GameMain</Crumb><Chevron />
          <Crumb href="#scripts">Scripts</Crumb><Chevron />
          <Crumb href="#base" $bold>Base</Crumb>
        </Crumbs>
        <Files>
          {['GameEntry...', 'GameEntry', 'GameEntry...'].map((f, i) => (
            <File key={i}><ScriptMark w={72} h={84} /><FileName>{f}</FileName></File>
          ))}
        </Files>
        <SizeBar><Slider type="range" min={0} max={100} defaultValue={60} aria-label="Icon size" /></SizeBar>
      </Browser>
    </ProjectBody>
  </ProjectPanel>
);

const Inspector = () => (
  <InspectorPanel>
    <TabBar $right={31}>
      <Tab $w={143} $active $pad={13} $gap={7}><Info />Inspector</Tab>
      <Spacer />
      <BareButton $w={22} aria-label="Lock"><Lock /></BareButton>
    </TabBar>
    <ObjectHeader>
      <ObjectIcon aria-label="Object icon">
        <Ico w={40} h={37}>
          <path d="M15 1l14 6.500v16L15 31 1 23.500v-16zM1 7.500l14 7.500 14-7.500M15 15v16" stroke={c.text} strokeWidth="2" strokeLinejoin="round" />
          <path d="M29 30h11l-5.500 6.500z" fill={c.text} />
        </Ico>
      </ObjectIcon>
      <ObjectFields>
        <FieldLine>
          <Check id="active" label="Active" on after={9} />
          <TextBox $w={378} $bold defaultValue="FrameWork" aria-label="Name" />
          <Check id="static" before={4} after={7} />
          <Label htmlFor="static">Static</Label>
        </FieldLine>
        <FieldLine>
          <Label htmlFor="tag" $w={34}>Tag</Label>
          <Drop $w={213} $after={22}>
            <DropSelect id="tag" defaultValue="Untagged"><option>Untagged</option></DropSelect>
            <Caret w={11} />
          </Drop>
          <Label htmlFor="layer" $w={57}>Layer</Label>
          <Drop $w={193}>
            <DropSelect id="layer" defaultValue="Default"><option>Default</option></DropSelect>
            <Caret w={11} />
          </Drop>
        </FieldLine>
      </ObjectFields>
    </ObjectHeader>
    <ComponentHeader>
      <HeaderIcon $w={24}><FoldDown /></HeaderIcon>
      <HeaderIcon $w={58}><Axes /></HeaderIcon>
      <ComponentTitle>Transform</ComponentTitle>
      <BareButton $w={30} aria-label="Help"><Help /></BareButton>
      <BareButton $w={30} aria-label="Presets"><Preset /></BareButton>
    </ComponentHeader>
    <ComponentBody>
      <Vector name="Position" value="0" />
      <Vector name="Rotation" value="0" />
      <Vector name="Scale" value="1" linked />
    </ComponentBody>
    <ComponentHeader>
      <HeaderIcon $w={24}><FoldDown /></HeaderIcon>
      <HeaderIcon $w={27}><ScriptMark w={18} h={21} /></HeaderIcon>
      <Check id="entry" label="Game Entry enabled" on after={10} />
      <ComponentTitle>Game Entry (Script)</ComponentTitle>
      <BareButton $w={30} aria-label="Help"><Help /></BareButton>
      <BareButton $w={30} aria-label="Presets"><Preset /></BareButton>
    </ComponentHeader>
    <ComponentBody>
      <FieldLine>
        <Label htmlFor="script" $w={212} $dim>Script</Label>
        <ObjectField id="script">
          <ScriptMark w={14} h={16} faded />
          GameEntry
          <ObjectPick><Ico w={17} h={17}><circle cx="8.500" cy="8.500" r="7.500" stroke="#808080" strokeWidth="1.500" /></Ico></ObjectPick>
        </ObjectField>
      </FieldLine>
    </ComponentBody>
    <AddComponent>Add Component</AddComponent>
    <Watermark>CSDN @最爱番茄的土豆</Watermark>
  </InspectorPanel>
);

export default function App() {
  return (
    <>
      <Global />
      <Shell>
        <TopBar>
          <TopGroup $gap={6}>
            <TopButton $w={77}>Sign in</TopButton>
            <TopButton $w={46} aria-label="Cloud"><Cloud /></TopButton>
            <TopButton $w={45} $h={31} aria-label="Debug"><Debug /></TopButton>
          </TopGroup>
          <TopGroup $gap={2}>
            <TopButton $w={46} aria-label="Play"><Play /></TopButton>
            <TopButton $w={46} aria-label="Pause"><Pause /></TopButton>
            <TopButton $w={47} $faint aria-label="Step"><Step /></TopButton>
          </TopGroup>
          <TopGroup $gap={6} $end>
            <TopButton $w={46} aria-label="History"><History /></TopButton>
            <TopButton $w={46} aria-label="Search"><Lens s={19} /></TopButton>
            <Drop $w={118}>
              <DropSelect $top aria-label="Layers" defaultValue="Layers"><option>Layers</option></DropSelect>
              <Caret w={11} />
            </Drop>
            <Drop $w={118}>
              <DropSelect $top aria-label="Layout" defaultValue="Layout"><option>Layout</option></DropSelect>
              <Caret w={11} />
            </Drop>
          </TopGroup>
        </TopBar>
        <Body>
          <Left>
            <Upper>
              <Hierarchy />
              <Scene />
            </Upper>
            <Project />
          </Left>
          <Inspector />
        </Body>
      </Shell>
    </>
  );
}
